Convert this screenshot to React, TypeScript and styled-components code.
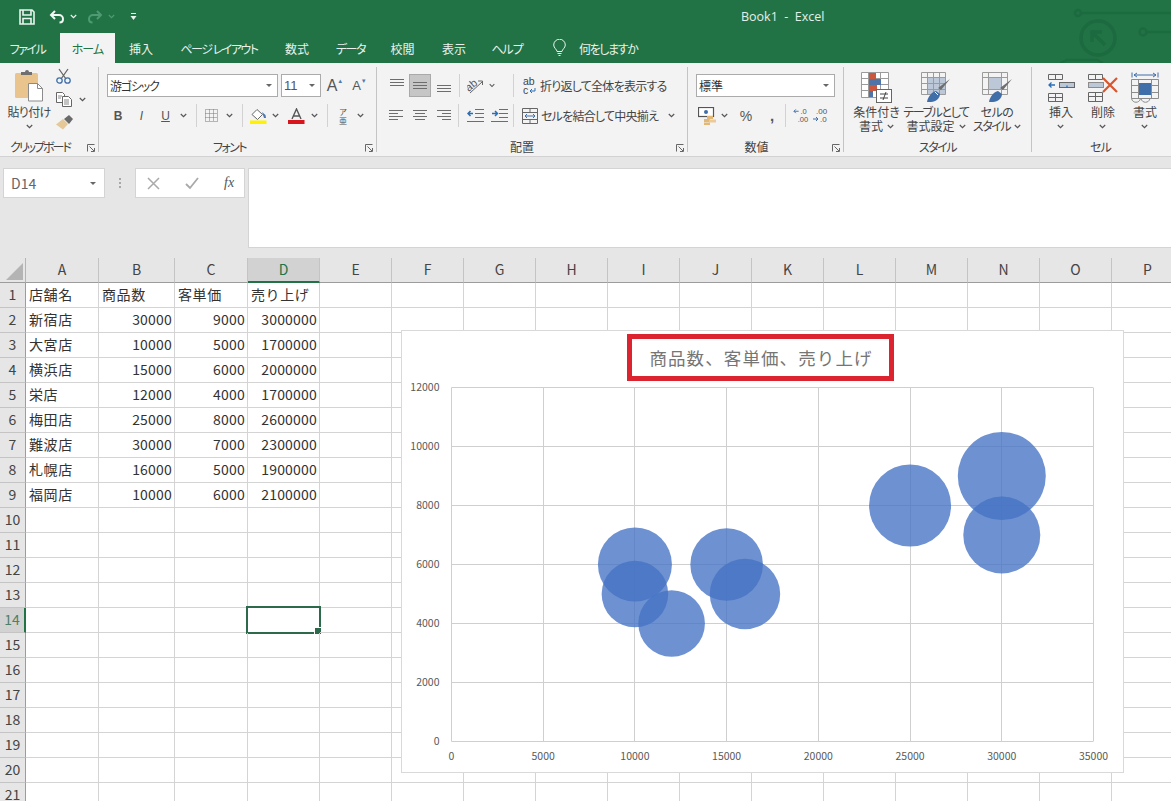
import React from "react";
import styled, { createGlobalStyle } from "styled-components";

const Global = createGlobalStyle`
  html, body { margin: 0; padding: 0; background: #fff; }
  * { box-sizing: border-box; }
`;

const JP = `"Noto Sans CJK JP", "Noto Sans", sans-serif`;

const Page = styled.div`
  width: 1171px;
  height: 801px;
  overflow: hidden;
  display: flex;
  flex-direction: column;
  font-family: ${JP};
  background: #fff;
`;

/* ---------- title bar ---------- */
const TitleBar = styled.header`
  position: relative;
  z-index: 1;
  height: 33px;
  background: #217346;
  display: flex;
  align-items: center;
  padding-left: 19px;
  flex: none;
`;
const QatSlot = styled.span<{ $w: number }>`
  width: ${(p) => p.$w}px;
  display: flex;
  align-items: center;
  flex: none;
`;
const WindowTitle = styled.div`
  margin-left: 604px;
  color: #e4efe9;
  font: 12.5px "Open Sans", "Noto Sans", sans-serif;
  white-space: pre;
`;
const Circuit = styled.svg`
  position: absolute;
  left: 1060px;
  top: 0;
`;

/* ---------- tabs ---------- */
const TabBar = styled.nav`
  height: 30px;
  background: #217346;
  display: flex;
  flex: none;
  position: relative;
`;
const Tab = styled.div<{ $w: number; $active?: boolean; $ml?: number; $ls?: number }>`
  width: ${(p) => p.$w}px;
  margin-left: ${(p) => p.$ml ?? 0}px;
  display: flex;
  align-items: center;
  justify-content: center;
  font-size: 12px;
  font-feature-settings: "palt";
  letter-spacing: ${(p) => p.$ls ?? 0}px;
  color: ${(p) => (p.$active ? "#217346" : "#e9f2ed")};
  background: ${(p) => (p.$active ? "#f3f3f3" : "transparent")};
`;
const Tell = styled.div`
  display: flex;
  align-items: center;
  margin-left: 20px;
  gap: 13px;
  font-size: 12px;
  letter-spacing: -1.4px;
  font-feature-settings: "palt";
  color: #e9f2ed;
`;

/* ---------- ribbon ---------- */
const Ribbon = styled.section`
  height: 94px;
  background: #f3f3f3;
  border-bottom: 1px solid #d2d2d2;
  display: flex;
  padding-top: 4px;
  flex: none;
  font-feature-settings: "palt";
  font-size: 12px;
  color: #444;
`;
const Group = styled.div<{ $w: number }>`
  position: relative;
  width: ${(p) => p.$w}px;
  height: 85px;
  border-right: 1px solid #c4c4c4;
  display: flex;
  flex-direction: column;
  flex: none;
  &:last-child { border-right: none; }
`;
const GroupBody = styled.div<{ $pl?: number }>`
  flex: 1;
  min-height: 0;
  padding-left: ${(p) => p.$pl ?? 0}px;
`;
const BigBody = styled(GroupBody)`
  display: flex;
`;
const GroupLabel = styled.div<{ $ox?: number; $ls?: number }>`
  height: 18px;
  line-height: 18px;
  margin-bottom: -4px;
  flex: none;
  text-align: center;
  font-size: 12px;
  letter-spacing: ${(p) => p.$ls ?? 0}px;
  color: #444;
  transform: translateX(${(p) => p.$ox ?? 0}px);
`;
const Launcher = styled.svg`
  position: absolute;
  right: 3px;
  bottom: 0;
`;
const Rows = styled.div`
  display: flex;
  flex-direction: column;
  gap: 7px;
  padding-top: 7px;
`;
const Row = styled.div`
  display: flex;
  align-items: center;
  height: 23px;
`;
const Slot = styled.span<{ $w: number; $active?: boolean }>`
  width: ${(p) => p.$w}px;
  height: 23px;
  flex: none;
  display: flex;
  align-items: center;
  justify-content: center;
  background: ${(p) => (p.$active ? "#c6c6c6" : "transparent")};
  border: ${(p) => (p.$active ? "1px solid #a9a9a9" : "none")};
`;
const Divider = styled.span<{ $l: number; $r: number }>`
  width: 1px;
  height: 23px;
  flex: none;
  background: #d2d2d2;
  margin: 0 ${(p) => p.$r}px 0 ${(p) => p.$l}px;
`;
const Select = styled.div<{ $w: number; $ml?: number; $ls?: number }>`
  width: ${(p) => p.$w}px;
  margin-left: ${(p) => p.$ml ?? 0}px;
  height: 23px;
  flex: none;
  background: #fff;
  border: 1px solid #ababab;
  display: flex;
  align-items: center;
  justify-content: space-between;
  padding: 0 5px 0 2px;
  font-size: 12px;
  letter-spacing: ${(p) => p.$ls ?? 0}px;
  color: #333;
`;
const DownTri = styled.i`
  width: 0;
  height: 0;
  border-left: 3px solid transparent;
  border-right: 3px solid transparent;
  border-top: 3px solid #666;
`;
const Glyph = styled.span<{ $size?: number; $bold?: boolean; $italic?: boolean; $under?: boolean; $raised?: boolean; $blue?: boolean }>`
  font-family: "Liberation Sans", sans-serif;
  font-size: ${(p) => p.$size ?? 12}px;
  font-weight: ${(p) => (p.$bold ? 700 : 400)};
  font-style: ${(p) => (p.$italic ? "italic" : "normal")};
  text-decoration: ${(p) => (p.$under ? "underline" : "none")};
  color: ${(p) => (p.$blue ? "#4f7cae" : "#555")};
  line-height: 1;
  margin-top: ${(p) => (p.$raised ? "-9px" : "0")};
`;
const Phonetic = styled.span`
  display: flex;
  flex-direction: column;
  align-items: center;
  font-size: 8px;
  line-height: 9px;
  color: #555;
`;
const InlineLabel = styled.span<{ $ml?: number }>`
  margin-left: ${(p) => p.$ml ?? 0}px;
  white-space: nowrap;
  font-size: 12px;
  letter-spacing: -0.75px;
  color: #444;
`;
const PasteButton = styled.div`
  width: 54px;
  margin-left: 2px;
  padding-top: 2px;
  display: flex;
  flex-direction: column;
  align-items: center;
  flex: none;
`;
const PasteLabel = styled.span`
  margin-top: 3px;
  line-height: 14px;
  letter-spacing: -0.7px;
  white-space: nowrap;
`;
const SmallTools = styled.div`
  display: flex;
  flex-direction: column;
  margin-top: -3px;
`;
const SmallTool = styled.div`
  height: 23.5px;
  display: flex;
  align-items: center;
  gap: 7px;
`;
const ChevronWrap = styled.span`
  display: flex;
  justify-content: center;
  margin-top: 5px;
`;
const BigButton = styled.div<{ $w: number }>`
  width: ${(p) => p.$w}px;
  flex: none;
  padding-top: 4px;
  display: flex;
  flex-direction: column;
  align-items: center;
`;
const BigIcon = styled.div`
  height: 33px;
  display: flex;
  align-items: center;
  justify-content: center;
`;
const BigText = styled.div`
  margin-top: 1px;
  text-align: center;
  line-height: 14px;
  font-size: 12px;
  white-space: nowrap;
  display: flex;
  flex-direction: column;
  align-items: center;
`;
const TextLine = styled.span<{ $ls?: number }>`
  display: flex;
  align-items: center;
  gap: 4px;
  letter-spacing: ${(p) => p.$ls ?? 0}px;
`;

/* ---------- formula bar ---------- */
const FormulaArea = styled.section`
  height: 101px;
  background: #e6e6e6;
  padding: 11px 0 0 3px;
  display: flex;
  align-items: flex-start;
  flex: none;
`;
const NameBox = styled.div`
  width: 102px;
  height: 30px;
  background: #fff;
  border: 1px solid #d4d4d4;
  display: flex;
  align-items: center;
  justify-content: space-between;
  padding: 0 8px 0 7px;
  color: #666;
  font-size: 14px;
`;
const Dots = styled.span`
  width: 30px;
  height: 30px;
  display: flex;
  flex-direction: column;
  align-items: center;
  justify-content: center;
  gap: 2px;
  i { width: 2px; height: 2px; background: #a8a8a8; }
`;
const FxBox = styled.div`
  width: 110px;
  height: 30px;
  background: #fff;
  border: 1px solid #d4d4d4;
  display: flex;
  align-items: center;
  padding-left: 11px;
  gap: 25px;
`;
const FxText = styled.span`
  font: italic 14px "Liberation Serif", serif;
  color: #555;
`;
const FormulaInput = styled.div`
  margin-left: 3px;
  flex: 1;
  height: 80px;
  background: #fff;
  border: 1px solid #d4d4d4;
  border-right: none;
`;

/* ---------- sheet ---------- */
const Sheet = styled.main`
  position: relative;
  flex: 1;
  overflow: hidden;
`;
const SheetRow = styled.div`
  display: flex;
  height: 25px;
`;
const Corner = styled.div`
  width: 26px;
  height: 25px;
  flex: none;
  background: #e6e6e6;
  border-right: 1px solid #b4b4b4;
  border-bottom: 1px solid #9c9c9c;
  position: relative;
  &::after {
    content: "";
    position: absolute;
    right: 2px;
    bottom: 2px;
    border-style: solid;
    border-width: 0 0 17px 17px;
    border-color: transparent transparent #b4b4b4 transparent;
  }
`;
const ColHead = styled.div<{ $w: number; $sel?: boolean }>`
  width: ${(p) => p.$w}px;
  flex: none;
  background: ${(p) => (p.$sel ? "#d2d2d2" : "#e6e6e6")};
  border-right: 1px solid #c4c4c4;
  border-bottom: ${(p) => (p.$sel ? "2px solid #217346" : "1px solid #9c9c9c")};
  color: ${(p) => (p.$sel ? "#217346" : "#444")};
  display: flex;
  align-items: center;
  justify-content: center;
  padding-bottom: 2px;
  font-size: 14px;
`;
const RowHead = styled.div<{ $sel?: boolean }>`
  width: 26px;
  flex: none;
  background: ${(p) => (p.$sel ? "#d2d2d2" : "#e6e6e6")};
  border-right: ${(p) => (p.$sel ? "2px solid #217346" : "1px solid #9c9c9c")};
  border-bottom: 1px solid #c4c4c4;
  color: ${(p) => (p.$sel ? "#4f7f66" : "#444")};
  display: flex;
  align-items: center;
  justify-content: center;
  padding-bottom: 2px;
  font-size: 14px;
`;
const Cell = styled.div<{ $w: number; $num?: boolean }>`
  position: relative;
  width: ${(p) => p.$w}px;
  flex: none;
  border-right: 1px solid #d4d4d4;
  border-bottom: 1px solid #d4d4d4;
  display: flex;
  align-items: center;
  justify-content: ${(p) => (p.$num ? "flex-end" : "flex-start")};
  padding: 0 2px 2px 3px;
  font-size: 14px;
  letter-spacing: ${(p) => (p.$num ? "0.2px" : "0.6px")};
  color: #333;
  white-space: nowrap;
`;
const Selection = styled.div`
  position: absolute;
  left: -2px;
  top: -2px;
  width: 75px;
  height: 28px;
  border: 2px solid #2d6a4c;
  &::after {
    content: "";
    position: absolute;
    right: -3px;
    bottom: -3px;
    width: 6px;
    height: 6px;
    background: #2d6a4c;
    border: 1px solid #fff;
  }
`;

/* ---------- chart ---------- */
const ChartFrame = styled.figure`
  position: absolute;
  left: 401px;
  top: 72px;
  width: 723px;
  height: 443px;
  margin: 0;
  background: #fff;
  border: 1px solid #d9d9d9;
  display: flex;
  flex-direction: column;
`;
const ChartTitle = styled.figcaption`
  width: 267px;
  height: 47px;
  margin: 3px 0 0 225px;
  border: 5px solid #dc2430;
  display: flex;
  align-items: center;
  justify-content: center;
  padding-left: 1px;
  font-size: 17.5px;
  letter-spacing: 1.1px;
  color: #757575;
  flex: none;
  white-space: nowrap;
`;
const ChartSvg = styled.svg`
  display: block;
  flex: none;
  text { font-family: ${JP}; font-size: 10.5px; fill: #595959; }
`;

/* ---------- icons ---------- */
const Chevron = ({ c = "#555" }: { c?: string }) => (
  <svg width="7" height="5" viewBox="0 0 7 5"><path d="M.8 1 3.5 3.7 6.2 1" fill="none" stroke={c} strokeWidth="1.2" /></svg>
);
const Launch = () => (
  <Launcher width="8" height="8" viewBox="0 0 8 8">
    <path d="M.5 7.5V.5h7M2.5 2.5l4.5 4.5M7.5 4v3.5H4" fill="none" stroke="#666" />
  </Launcher>
);
const SaveIcon = () => (
  <svg width="16" height="16" viewBox="0 0 16 16" fill="none" stroke="#e9f4ee" strokeWidth="1.6">
    <path d="M1 1h12l2 2v12H1z" />
    <path d="M4 1v5h8V1M4 15V9.5h8V15" />
  </svg>
);
const UndoIcon = ({ c }: { c: string }) => (
  <svg width="16" height="14" viewBox="0 0 16 14" fill="none" stroke={c} strokeWidth="2">
    <path d="M6 1 2 5l4 4M2 5h8a4 4 0 0 1 4 4c0 2-1.500 3.500-3.500 3.500" />
  </svg>
);
const RedoIcon = ({ c }: { c: string }) => (
  <svg width="16" height="14" viewBox="0 0 16 14" fill="none" stroke={c} strokeWidth="2">
    <path d="M10 1l4 4-4 4M14 5H6a4 4 0 0 0-4 4c0 2 1.500 3.500 3.500 3.500" />
  </svg>
);
const QatMore = () => (
  <svg width="7" height="8" viewBox="0 0 7 8">
    <path d="M1 .5h5" stroke="#e9f4ee" />
    <path d="M.5 3h6L3.500 7z" fill="#e9f4ee" />
  </svg>
);
const Bulb = () => (
  <svg width="13" height="18" viewBox="0 0 13 18" fill="none" stroke="#e9f2ed" strokeWidth="1">
    <path d="M4 12.500c0-2-3.300-3.500-3.300-6.500a5.800 5.800 0 0 1 11.600 0c0 3-3.300 4.500-3.300 6.500zM4.500 14.500h4M5.500 16.500h2" />
  </svg>
);
const PasteIcon = () => (
  <svg width="29" height="33" viewBox="0 0 29 33">
    <rect x="0" y="4" width="23" height="25" rx="1.500" fill="#e9c48c" />
    <path d="M6 5V3h4a2 2 0 0 1 4 0h3v3H6z" fill="#6f6f6f" />
    <path d="M13.500 14.500h9l5 5v12.500h-14z" fill="#fff" stroke="#8b8b8b" />
    <path d="M22.500 14.500v5h5" fill="none" stroke="#8b8b8b" />
  </svg>
);
const ScissorsIcon = () => (
  <svg width="15" height="16" viewBox="0 0 15 16" fill="none">
    <path d="M3 1l7 10M12 1 5 11" stroke="#666" strokeWidth="1.300" />
    <circle cx="3.500" cy="12.500" r="2.700" stroke="#3f6ea8" strokeWidth="1.300" />
    <circle cx="11.500" cy="12.500" r="2.700" stroke="#3f6ea8" strokeWidth="1.300" />
  </svg>
);
const CopyIcon = () => (
  <svg width="16" height="15" viewBox="0 0 16 15" fill="#fff" stroke="#666">
    <path d="M.5.500h6l2 2v8h-8z" />
    <path d="M6.500 4.500h6l3 3v7h-9z" />
    <path d="M8 8h5M8 10h5M8 12h5M2 4h4M2 6h3" stroke="#888" fill="none" />
  </svg>
);
const BrushIcon = () => (
  <svg width="17" height="15" viewBox="0 0 17 15">
    <path d="M0 9.500 7 4l5 5-5 5.500z" fill="#e6c797" />
    <path d="M8 4l5-4 4 4-4 5z" fill="#6a6a6a" />
  </svg>
);
const BordersIcon = () => (
  <svg width="13" height="13" viewBox="0 0 13 13" fill="none" stroke="#777" strokeDasharray="1 1">
    <path d="M.5.500h12v12H.5zM4.500.500v12M8.500.500v12M.5 4.500h12M.5 8.500h12" />
  </svg>
);
const FillIcon = () => (
  <svg width="17" height="16" viewBox="0 0 17 16">
    <path d="M2 6.500 7 1.500l5.500 5-5 5z" fill="#fff" stroke="#666" />
    <path d="M12 4l3.500 3 .5 3h-2z" fill="#4a78b5" />
    <rect y="12.500" width="16.500" height="3.500" fill="#fff200" />
  </svg>
);
const FontColorIcon = () => (
  <svg width="17" height="16" viewBox="0 0 17 16">
    <path d="M4 11 8.500 1 13 11M5.500 8h6" fill="none" stroke="#555" strokeWidth="1.400" />
    <rect y="12" width="16.500" height="4" fill="#d8151c" />
  </svg>
);
const Lines = ({ l }: { l: [number, number, number][] }) => (
  <svg width="15" height="15" viewBox="0 0 15 15" stroke="#6d6d6d">
    {l.map(([a, b, y], i) => <path key={i} d={`M${a} ${y + 0.5}H${b}`} />)}
  </svg>
);
const TOP: [number, number, number][] = [[0, 14, 1], [0, 14, 4], [0, 14, 7]];
const MID: [number, number, number][] = [[0, 14, 4], [0, 14, 7], [0, 14, 10]];
const BOT: [number, number, number][] = [[0, 14, 7], [0, 14, 10], [0, 14, 13]];
const LEFT: [number, number, number][] = [[0, 14, 2], [0, 9, 5], [0, 14, 8], [0, 9, 11]];
const CENTER: [number, number, number][] = [[0, 14, 2], [2, 12, 5], [0, 14, 8], [2, 12, 11]];
const RIGHT: [number, number, number][] = [[0, 14, 2], [5, 14, 5], [0, 14, 8], [5, 14, 11]];
const OrientIcon = () => (
  <svg width="17" height="16" viewBox="0 0 17 16">
    <text x="0" y="11" transform="rotate(-40 5 10)" fontFamily="Liberation Sans" fontSize="11" fill="#555">ab</text>
    <path d="M3 15 15 4M11 3h4.500v4" fill="none" stroke="#666" />
  </svg>
);
const IndentIcon = ({ inc }: { inc?: boolean }) => (
  <svg width="17" height="15" viewBox="0 0 17 15" fill="none">
    <path d="M8 1.500h9M8 5.500h9M8 9.500h9M0 13.500h17" stroke="#6d6d6d" />
    {inc ? <path d="M1 5.500h5M4 3l2.500 2.500L4 8" stroke="#2a6eb5" strokeWidth="1.500" /> : <path d="M6 5.500H1M3.500 3 1 5.500 3.500 8" stroke="#2a6eb5" strokeWidth="1.500" />}
  </svg>
);
const WrapIcon = () => (
  <svg width="14" height="18" viewBox="0 0 14 18">
    <text x="0" y="8" fontFamily="Liberation Sans" fontSize="10.500" fill="#444">ab</text>
    <text x="0" y="17" fontFamily="Liberation Sans" fontSize="10.500" fill="#444">c</text>
    <path d="M12 11v3H7M9 12l-2 2 2 2" fill="none" stroke="#2a6eb5" />
  </svg>
);
const MergeIcon = () => (
  <svg width="16" height="16" viewBox="0 0 16 16" fill="none" stroke="#666">
    <path d="M.5.500h15v15H.5zM.5 4.500h15M.5 11.500h15M8 .5v4M8 11.500v4" />
    <path d="M3 8h10M5 6 3 8l2 2M11 6l2 2-2 2" stroke="#3f6ea8" />
  </svg>
);
const MoneyIcon = () => (
  <svg width="19" height="18" viewBox="0 0 19 18">
    <rect x=".5" y=".5" width="15" height="9" fill="#fff" stroke="#555" strokeWidth="1.200" />
    <circle cx="8" cy="5" r="2" fill="#3f6ea8" />
    <rect x="9" y="9" width="6" height="3" fill="#e3b774" />
    <rect x="6" y="12" width="6" height="3" fill="#e3b774" />
    <rect x="11" y="12.500" width="7" height="3" fill="#ecc998" />
    <rect x="6" y="15.500" width="6" height="2.500" fill="#e3b774" />
  </svg>
);
const DecimalIcon = ({ inc }: { inc?: boolean }) => (
  <svg width="17" height="17" viewBox="0 0 17 17">
    <g fontFamily="Liberation Sans" fontSize="8" fill="#555">
      {inc ? (
        <>
          <text x="8" y="7">.0</text>
          <text x="5" y="15">.00</text>
          <path d="M6 4H1M3 2 1 4l2 2" fill="none" stroke="#3f6ea8" />
        </>
      ) : (
        <>
          <text x="4" y="7">.00</text>
          <text x="8" y="15">.0</text>
          <path d="M1 12h5M4 10l2 2-2 2" fill="none" stroke="#3f6ea8" />
        </>
      )}
    </g>
  </svg>
);
const CondIcon = () => (
  <svg width="31" height="31" viewBox="0 0 31 31">
    <path d="M.5.500h27v25H.5zM7.500.500v25M19.500.500v25M.5 6.500h27M.5 12.500h27M.5 18.500h27" fill="#fff" stroke="#9b9b9b" />
    <rect x="8" y="1" width="7" height="6" fill="#c9583f" />
    <rect x="8" y="7" width="12" height="6" fill="#4f74a8" />
    <rect x="8" y="13" width="8" height="6" fill="#c9583f" />
    <rect x="8" y="19" width="4" height="6" fill="#4f74a8" />
    <rect x="15.500" y="17.500" width="15" height="13" fill="#fff" stroke="#666" />
    <path d="M19 22h8M19 26h8M25 20l-3 8" stroke="#444" fill="none" />
  </svg>
);
const TableIcon = () => (
  <svg width="30" height="31" viewBox="0 0 30 31">
    <rect x="6" y="5" width="18" height="17" fill="#bcc8d8" />
    <path d="M.5.500h24v22H.5zM6.500.500v22M12.500.500v22M18.500.500v22M.5 5.500h24M.5 11.500h24M.5 17.500h24" fill="none" stroke="#9b9b9b" />
    <path d="M29 7 20 18l-3-2z" fill="#6e6e6e" />
    <path d="M6 30c1-6 5-10 9-11l4 3c0 4-4 8-9 8z" fill="#3f6ea8" />
    <path d="M14 20l3 3" stroke="#fff" />
  </svg>
);
const CellStyleIcon = () => (
  <svg width="31" height="31" viewBox="0 0 31 31">
    <rect x="6" y="6" width="14" height="11" fill="#bcc8d8" />
    <path d="M.5.500h25v22H.5zM6.500.500v22M19.500.500v22M.5 5.500h25M.5 17.500h25" fill="none" stroke="#9b9b9b" />
    <path d="M30 7l-9 11-3-2z" fill="#6e6e6e" />
    <path d="M7 30c1-6 5-10 9-11l4 3c0 4-4 8-9 8z" fill="#3f6ea8" />
  </svg>
);
const InsertIcon = () => (
  <svg width="27" height="28" viewBox="0 0 27 28" fill="none" stroke="#666">
    <path d="M.5.500h14v5H.5zM7.500.500v5M.5 19.500h14v8H.5zM7.500 19.500v8M.5 23.500h14" />
    <rect x="11.500" y="8.500" width="15" height="5" fill="#bcc8d8" />
    <path d="M19 11.500v2M7 11H1M3.500 8.500 1 11l2.500 2.500" stroke="#2a6eb5" strokeWidth="1.300" />
  </svg>
);
const DeleteIcon = () => (
  <svg width="30" height="28" viewBox="0 0 30 28" fill="none" stroke="#666">
    <path d="M.5.500h14v5H.5zM7.500.500v5M.5 18.500h14v9H.5zM7.500 18.500v9M.5 22.500h14" />
    <rect x=".5" y="8.500" width="15" height="5" fill="#bcc8d8" stroke="#8c8c8c" />
    <path d="M15 4l14 14M29 4 15 18" stroke="#d8552f" strokeWidth="2.200" />
  </svg>
);
const FormatIcon = () => (
  <svg width="28" height="32" viewBox="0 0 28 32" fill="none" stroke="#8c8c8c">
    <path d="M1 .5v5M27 .5v5M3 3h22M3 3l3-2M3 3l3 2M25 3l-3-2M25 3l-3 2" stroke="#3f6ea8" />
    <path d="M.5 7.500h27v19H.5zM7.500 7.500v19M20.500 7.500v19M.5 13.500h27M.5 20.500h27" />
    <rect x="8" y="11" width="12" height="12" fill="#3f6ea8" stroke="none" />
    <path d="M.5 26.500c1 5 8 5 9 0M10 26.500c1 5 8 5 9 0" />
  </svg>
);
const CrossIcon = () => (
  <svg width="13" height="13" viewBox="0 0 13 13"><path d="M1 1l11 11M12 1 1 12" stroke="#a9a9a9" strokeWidth="1.500" /></svg>
);
const CheckIcon = () => (
  <svg width="14" height="13" viewBox="0 0 14 13"><path d="M1 7l4 4 8-10" fill="none" stroke="#a9a9a9" strokeWidth="1.800" /></svg>
);

/* ---------- data ---------- */
const COLS: [string, number][] = [
  ["A", 73], ["B", 76], ["C", 73], ["D", 72], ["E", 72], ["F", 72], ["G", 72], ["H", 72],
  ["I", 72], ["J", 72], ["K", 72], ["L", 72], ["M", 72], ["N", 72], ["O", 72], ["P", 72],
];
const DATA: (string | number)[][] = [
  ["店舗名", "商品数", "客単価", "売り上げ"],
  ["新宿店", 30000, 9000, 3000000],
  ["大宮店", 10000, 5000, 1700000],
  ["横浜店", 15000, 6000, 2000000],
  ["栄店", 12000, 4000, 1700000],
  ["梅田店", 25000, 8000, 2600000],
  ["難波店", 30000, 7000, 2300000],
  ["札幌店", 16000, 5000, 1900000],
  ["福岡店", 10000, 6000, 2100000],
];
const X_TICKS = [0, 5000, 10000, 15000, 20000, 25000, 30000, 35000];
const Y_TICKS = [0, 2000, 4000, 6000, 8000, 10000, 12000];
const px = (v: number) => 451.5 + (v / 35000) * 642;
const py = (v: number) => 741.5 - (v / 12000) * 354;
const BUBBLES: [number, number, number][] = [
  [30000, 9000, 44], [10000, 5000, 33.3], [15000, 6000, 36.3], [12000, 4000, 33.3],
  [25000, 8000, 41], [30000, 7000, 38.5], [16000, 5000, 35.2], [10000, 6000, 37],
];

const Big = ({ w, icon, a, b, lsA, lsB }: { w: number; icon: React.ReactNode; a: string; b?: string; lsA?: number; lsB?: number }) => (
  <BigButton $w={w}>
    <BigIcon>{icon}</BigIcon>
    <BigText>
      <TextLine $ls={lsA}>{a}</TextLine>
      {b ? <TextLine $ls={lsB}>{b}<Chevron /></TextLine> : <ChevronWrap><Chevron /></ChevronWrap>}
    </BigText>
  </BigButton>
);

export default function App() {
  return (
    <Page>
      <Global />
      <TitleBar>
        <QatSlot $w={30}><SaveIcon /></QatSlot>
        <QatSlot $w={21}><UndoIcon c="#f2f8f4" /></QatSlot>
        <QatSlot $w={17}><Chevron c="#e9f4ee" /></QatSlot>
        <QatSlot $w={21}><RedoIcon c="#4f9a72" /></QatSlot>
        <QatSlot $w={22}><Chevron c="#4f9a72" /></QatSlot>
        <QatSlot $w={7}><QatMore /></QatSlot>
        <WindowTitle>Book1  -  Excel</WindowTitle>
        <Circuit width="111" height="63" viewBox="0 0 111 63" fill="none" stroke="#1c6a3f" strokeWidth="2.500">
          <circle cx="18" cy="13" r="3" />
          <path d="M21 13h90M87 32h24" />
          <circle cx="83" cy="32" r="3.500" />
          <circle cx="38" cy="38" r="17" strokeWidth="3.500" />
          <path d="M32 42V32h10M32 32l13 13" strokeWidth="3.500" />
          <path d="M0 63l7-3h30l6 3" />
        </Circuit>
      </TitleBar>
      <TabBar>
        <Tab $w={55} $ls={-1.5}>ファイル</Tab>
        <Tab $w={55} $ml={5} $active $ls={-1}>ホーム</Tab>
        <Tab $w={52}>挿入</Tab>
        <Tab $w={104} $ls={-1.5}>ページ レイアウト</Tab>
        <Tab $w={52}>数式</Tab>
        <Tab $w={55} $ls={-1.5}>データ</Tab>
        <Tab $w={49}>校閲</Tab>
        <Tab $w={54}>表示</Tab>
        <Tab $w={52} $ls={-1}>ヘルプ</Tab>
        <Tell><Bulb />何をしますか</Tell>
      </TabBar>
      <Ribbon>
        <Group $w={99}>
          <BigBody>
            <PasteButton>
              <PasteIcon />
              <PasteLabel>貼り付け</PasteLabel>
              <ChevronWrap><Chevron /></ChevronWrap>
            </PasteButton>
            <SmallTools>
              <SmallTool><ScissorsIcon /></SmallTool>
              <SmallTool><CopyIcon /><Chevron /></SmallTool>
              <SmallTool><BrushIcon /></SmallTool>
            </SmallTools>
          </BigBody>
          <GroupLabel $ox={-9} $ls={-2}>クリップボード</GroupLabel>
          <Launch />
        </Group>
        <Group $w={278}>
          <GroupBody $pl={8}>
            <Rows>
              <Row>
                <Select $w={171} $ls={-1.2}>游ゴシック<DownTri /></Select>
                <Select $w={40} $ml={3}><Glyph $size={13}>11</Glyph><DownTri /></Select>
                <Slot $w={28}><Glyph $size={16}>A</Glyph><Glyph $size={6} $raised $blue>▲</Glyph></Slot>
                <Slot $w={21}><Glyph $size={13}>A</Glyph><Glyph $size={6} $raised $blue>▼</Glyph></Slot>
              </Row>
              <Row>
                <Slot $w={22}><Glyph $bold>B</Glyph></Slot>
                <Slot $w={25}><Glyph $italic>I</Glyph></Slot>
                <Slot $w={23}><Glyph $under>U</Glyph></Slot>
                <Slot $w={12}><Chevron /></Slot>
                <Divider $l={7} $r={6} />
                <Slot $w={17}><BordersIcon /></Slot>
                <Slot $w={18}><Chevron /></Slot>
                <Divider $l={4} $r={5} />
                <Slot $w={20}><FillIcon /></Slot>
                <Slot $w={14}><Chevron /></Slot>
                <Slot $w={28}><FontColorIcon /></Slot>
                <Slot $w={8}><Chevron /></Slot>
                <Divider $l={9} $r={8} />
                <Slot $w={14}><Phonetic><span>ア</span><span>亜</span></Phonetic></Slot>
                <Slot $w={20}><Chevron /></Slot>
              </Row>
            </Rows>
          </GroupBody>
          <GroupLabel $ox={-8} $ls={-1.5}>フォント</GroupLabel>
          <Launch />
        </Group>
        <Group $w={311}>
          <GroupBody $pl={8}>
            <Rows>
              <Row>
                <Slot $w={24}><Lines l={TOP} /></Slot>
                <Slot $w={22} $active><Lines l={MID} /></Slot>
                <Slot $w={26}><Lines l={BOT} /></Slot>
                <Divider $l={2} $r={2} />
                <Slot $w={27}><OrientIcon /></Slot>
                <Slot $w={6}><Chevron /></Slot>
                <Divider $l={18} $r={8} />
                <Slot $w={15}><WrapIcon /></Slot>
                <InlineLabel $ml={3}>折り返して全体を表示する</InlineLabel>
              </Row>
              <Row>
                <Slot $w={22}><Lines l={LEFT} /></Slot>
                <Slot $w={26}><Lines l={CENTER} /></Slot>
                <Slot $w={22}><Lines l={RIGHT} /></Slot>
                <Divider $l={3} $r={3} />
                <Slot $w={26}><IndentIcon /></Slot>
                <Slot $w={22}><IndentIcon inc /></Slot>
                <Divider $l={3} $r={7} />
                <Slot $w={17}><MergeIcon /></Slot>
                <InlineLabel $ml={3}>セルを結合して中央揃え</InlineLabel>
                <Slot $w={26}><Chevron /></Slot>
              </Row>
            </Rows>
          </GroupBody>
          <GroupLabel $ox={-10}>配置</GroupLabel>
          <Launch />
        </Group>
        <Group $w={156}>
          <GroupBody $pl={8}>
            <Rows>
              <Row><Select $w={139}>標準<DownTri /></Select></Row>
              <Row>
                <Slot $w={22}><MoneyIcon /></Slot>
                <Slot $w={12}><Chevron /></Slot>
                <Slot $w={32}><Glyph $size={14}>%</Glyph></Slot>
                <Slot $w={20}><Glyph $size={15} $bold>,</Glyph></Slot>
                <Divider $l={3} $r={7} />
                <Slot $w={16}><DecimalIcon inc /></Slot>
                <Slot $w={23}><DecimalIcon /></Slot>
              </Row>
            </Rows>
          </GroupBody>
          <GroupLabel $ox={-9}>数値</GroupLabel>
          <Launch />
        </Group>
        <Group $w={188}>
          <BigBody $pl={5}>
            <Big w={55} icon={<CondIcon />} a="条件付き" b="書式" />
            <Big w={64} icon={<TableIcon />} a="テーブルとして" b="書式設定" lsA={-1.4} />
            <Big w={58} icon={<CellStyleIcon />} a="セルの" b="スタイル" lsA={-0.5} lsB={-1.5} />
          </BigBody>
          <GroupLabel $ls={-1.5}>スタイル</GroupLabel>
        </Group>
        <Group $w={139}>
          <BigBody $pl={8}>
            <Big w={42} icon={<InsertIcon />} a="挿入" />
            <Big w={42} icon={<DeleteIcon />} a="削除" />
            <Big w={42} icon={<FormatIcon />} a="書式" />
          </BigBody>
          <GroupLabel $ox={-1} $ls={-1}>セル</GroupLabel>
        </Group>
      </Ribbon>
      <FormulaArea>
        <NameBox>D14<DownTri /></NameBox>
        <Dots><i /><i /><i /></Dots>
        <FxBox><CrossIcon /><CheckIcon /><FxText>fx</FxText></FxBox>
        <FormulaInput />
      </FormulaArea>
      <Sheet>
        <SheetRow>
          <Corner />
          {COLS.map(([n, w]) => <ColHead key={n} $w={w} $sel={n === "D"}>{n}</ColHead>)}
        </SheetRow>
        {Array.from({ length: 21 }, (_, r) => (
          <SheetRow key={r}>
            <RowHead $sel={r === 13}>{r + 1}</RowHead>
            {COLS.map(([n, w], c) => {
              const v = DATA[r]?.[c];
              return (
                <Cell key={n} $w={w} $num={typeof v === "number"}>
                  {v}
                  {r === 13 && n === "D" ? <Selection /> : null}
                </Cell>
              );
            })}
          </SheetRow>
        ))}
        <ChartFrame>
          <ChartTitle>商品数、客単価、売り上げ</ChartTitle>
          <ChartSvg width="721" height="391" viewBox="402 381 721 391">
            {X_TICKS.map((t) => (
              <g key={t}>
                <path d={`M${Math.floor(px(t)) + 0.5} 387.500V741.500`} stroke="#cfcfcf" />
                <text x={px(t)} y="760" textAnchor="middle">{t}</text>
              </g>
            ))}
            {Y_TICKS.map((t) => (
              <g key={t}>
                <path d={`M451.500 ${Math.floor(py(t)) + 0.5}H1093`} stroke="#cfcfcf" />
                <text x="439.500" y={py(t) + 3.500} textAnchor="end">{t}</text>
              </g>
            ))}
            {BUBBLES.map(([x, y, r], i) => (
              <circle key={i} cx={px(x)} cy={py(y)} r={r} fill="#4472c4" fillOpacity="0.78" />
            ))}
          </ChartSvg>
        </ChartFrame>
      </Sheet>
    </Page>
  );
}
